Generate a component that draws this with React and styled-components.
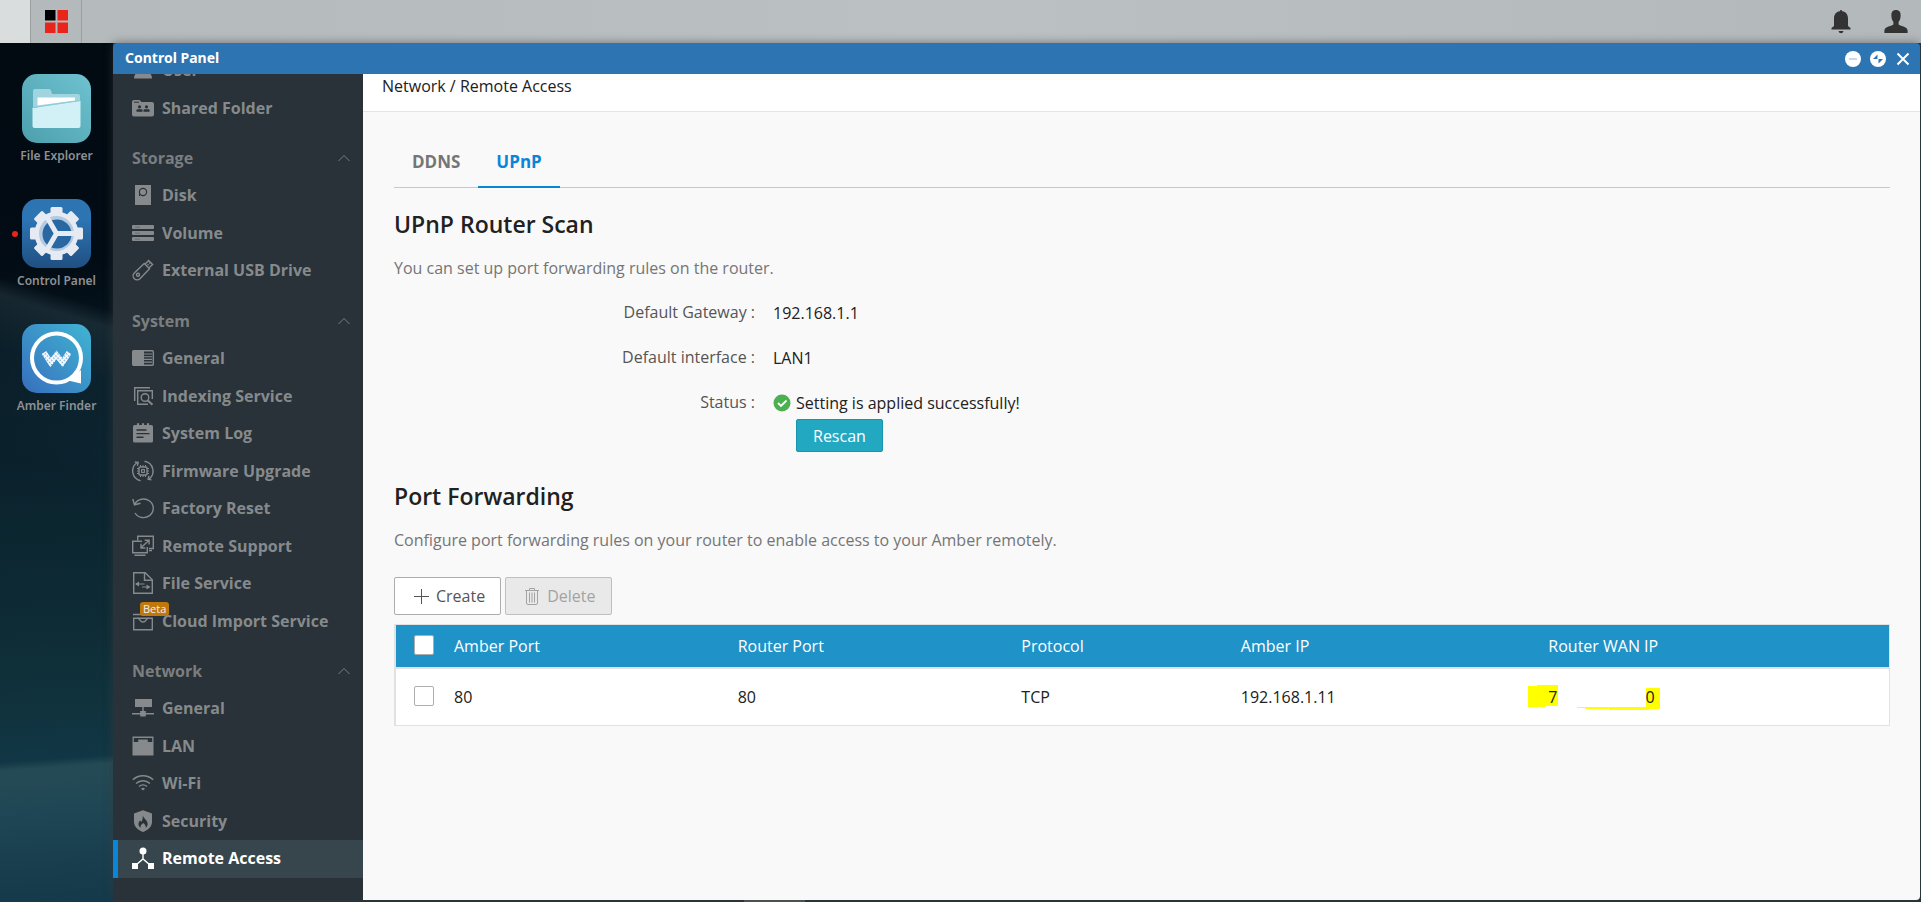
import React, { useState } from 'react';
import styled, { createGlobalStyle } from 'styled-components';

const GlobalStyle = createGlobalStyle`
  * {
    box-sizing: border-box;
  }

  body {
    margin: 0;
    font-family: 'Open Sans', 'Noto Sans', sans-serif;
    font-size: 16px;
    line-height: 24px;
    color: #212121;
  }

  button, input {
    font: inherit;
  }

  h1, h2, p, ul, dl, dd {
    margin: 0;
    padding: 0;
  }
`;

const Desktop = styled.div`
  height: 100vh;
  display: flex;
  flex-direction: column;
  overflow: hidden;
  background: linear-gradient(#4f5a5c, #4f5a5c) 40% 100% / 61px 2px no-repeat #24333a;
`;

const TopBar = styled.header`
  flex: none;
  height: 43px;
  display: flex;
  align-items: center;
  justify-content: space-between;
  background: linear-gradient(90deg, #b4b9bc 0%, #bbc0c3 50%, #b3b8bb 100%);
`;

const TopGroup = styled.div`
  display: flex;
  align-items: center;
  height: 100%;
  gap: ${({ $gap }) => $gap || 0}px;
  padding-right: ${({ $end }) => $end || 0}px;
`;

const StartCorner = styled.div`
  width: 30px;
  height: 100%;
  background: #d9dddd;
`;

const IconButton = styled.button`
  display: flex;
  align-items: center;
  justify-content: center;
  padding: 0;
  border: 0;
  background: none;
  cursor: pointer;
`;

const AppsButton = styled(IconButton)`
  width: 52px;
  height: 100%;
  padding-bottom: 1px;
  border-left: 1px solid #9a9fa2;
  border-right: 1px solid #9a9fa2;
`;

const Workspace = styled.div`
  flex: 1;
  min-height: 0;
  display: flex;
`;

const Dock = styled.nav`
  flex: none;
  width: 113px;
  padding-top: 31px;
  display: flex;
  flex-direction: column;
  gap: 33px;
  background:
    linear-gradient(197deg, transparent 30%, rgba(90, 120, 130, 0.22) 32%, rgba(30, 70, 85, 0.2) 38%, transparent 50%),
    linear-gradient(176deg, #020a12 0%, #020c14 26%, #0a202b 46%, #0e2c36 68%, #10323c 76%, #113645 83%, #244b55 84%, #1e4554 90%, #14394a 100%);
`;

const DockItem = styled.a`
  position: relative;
  display: flex;
  flex-direction: column;
  align-items: center;
  gap: 3px;
  color: #8d9194;
  font-family: 'Noto Sans', sans-serif;
  font-size: 12px;
  font-weight: 600;
  line-height: 20px;
  text-decoration: none;
`;

const RunningDot = styled.i`
  position: absolute;
  left: 12px;
  top: 32px;
  width: 6px;
  height: 6px;
  border-radius: 50%;
  background: #e8241b;
`;

const Window = styled.section`
  flex: 1;
  min-width: 0;
  margin: 0 1px 2px 0;
  display: flex;
  flex-direction: column;
  border-radius: 4px;
  box-shadow: 0 0 10px rgba(60, 60, 60, 0.6);
  overflow: hidden;
`;

const TitleBar = styled.div`
  flex: none;
  height: 31px;
  padding: 0 9px 0 12px;
  display: flex;
  align-items: center;
  justify-content: space-between;
  background: #2d74b3;
  color: #fff;
`;

const WindowTitle = styled.h1`
  padding-bottom: 2px;
  font-family: 'Noto Sans', sans-serif;
  font-size: 14px;
  font-weight: 700;
  line-height: 24px;
`;

const WindowControls = styled.div`
  display: flex;
  align-items: center;
  gap: 9px;
`;

const WindowBody = styled.div`
  flex: 1;
  min-height: 0;
  display: flex;
`;

/* reversed so that the list opens scrolled to its end */
const Sidebar = styled.aside`
  flex: none;
  width: 250px;
  display: flex;
  flex-direction: column-reverse;
  overflow-y: auto;
  scrollbar-width: none;
  background: #283238;
`;

const SideNav = styled.nav`
  flex: none;
  padding-bottom: 22px;
  display: flex;
  flex-direction: column;
  gap: 12px;
`;

const SectionToggle = styled.button`
  width: 100%;
  height: 38px;
  padding: 0 12px 0 19px;
  display: flex;
  align-items: center;
  justify-content: space-between;
  border: 0;
  background: none;
  color: #7b7e80;
  font-weight: 700;
  cursor: pointer;
`;

const SideList = styled.ul`
  list-style: none;
`;

const SideItem = styled.li`
  height: 38px;

  &:nth-child(even) {
    height: 37px;
  }
`;

const SideLink = styled.a`
  position: relative;
  height: 100%;
  padding: 0 0 2px 14px;
  display: flex;
  align-items: center;
  gap: 8px;
  border-left: 5px solid ${({ $active }) => ($active ? '#0b85d8' : 'transparent')};
  background: ${({ $active }) => ($active ? '#37464d' : 'none')};
  color: ${({ $active }) => ($active ? '#fff' : '#868a8c')};
  font-weight: 700;
  text-decoration: none;
`;

const BetaBadge = styled.span`
  position: absolute;
  left: 22px;
  top: -1px;
  padding: 0 3px;
  border-radius: 3px;
  background: #c0780d;
  color: #eee;
  font-size: 11px;
  font-weight: 400;
  line-height: 14px;
`;

const Main = styled.main`
  flex: 1;
  min-width: 0;
  overflow-y: auto;
  background: #f9f9f9;
`;

const Breadcrumb = styled.div`
  height: 38px;
  padding-left: 19px;
  border-bottom: 1px solid #e4e4e4;
  background: #fff;
`;

const Content = styled.div`
  padding: 25px 30px 25px 31px;
`;

const Tabs = styled.div`
  display: flex;
  margin-bottom: 20px;
  border-bottom: 1px solid #c8c8c8;
`;

const Tab = styled.button`
  height: 51px;
  margin-bottom: -1px;
  padding: 0 18px;
  border: 0;
  border-bottom: 2px solid ${({ $active }) => ($active ? '#0b85d8' : 'transparent')};
  background: none;
  color: ${({ $active }) => ($active ? '#0b85d8' : '#757575')};
  font-size: 17px;
  font-weight: 700;
  cursor: pointer;
`;

const SectionTitle = styled.h2`
  font-size: 23px;
  font-weight: 600;
  line-height: 32px;
`;

const Hint = styled.p`
  margin-top: 16px;
  color: #757575;
`;

const Details = styled.dl`
  margin: 20px 0 28px;
  display: flex;
  flex-direction: column;
  gap: 20px;
`;

const DetailRow = styled.div`
  display: flex;
  align-items: flex-start;
  gap: 18px;
`;

const DetailLabel = styled.dt`
  width: 361px;
  color: #555;
  text-align: right;
`;

const DetailValue = styled.dd`
  padding-top: 1px;
`;

const StatusLine = styled.div`
  display: flex;
  align-items: center;
  gap: 5px;
`;

const RescanButton = styled.button`
  height: 33px;
  margin: 4px 0 0 23px;
  padding: 0 16px;
  border: 1px solid #1a94ac;
  border-radius: 2px;
  background: #23a8c2;
  color: #fff;
  cursor: pointer;
`;

const Toolbar = styled.div`
  margin: 25px 0 9px;
  display: flex;
  gap: 4px;
`;

const ToolButton = styled.button`
  height: 38px;
  padding: 0 15px 0 17px;
  display: flex;
  align-items: center;
  gap: 6px;
  border: 1px solid #adadad;
  border-radius: 2px;
  background: #fff;
  color: #555;
  cursor: pointer;

  &:disabled {
    border-color: #bfbfbf;
    background: #e9e9e9;
    color: #a3a3a3;
    cursor: default;
  }
`;

const RuleTable = styled.table`
  width: 100%;
  table-layout: fixed;
  border: 1px solid #e2e2e2;
  border-left-width: 2px;
  border-spacing: 0;
  background: #fff;
`;

const HeadCell = styled.th`
  width: ${({ $width }) => $width || 'auto'};
  height: 44px;
  padding: 0 8px;
  border-bottom: 2px solid #e2e2e2;
  background: #1f92c8;
  color: #fff;
  font-weight: 400;
  text-align: left;
`;

const Cell = styled.td`
  height: 56px;
  padding: 0 8px;
`;

const CheckBox = styled.input`
  appearance: none;
  display: block;
  width: 20px;
  height: 20px;
  margin: 0 0 2px 10px;
  border: 1px solid #adadad;
  border-radius: 2px;
  background: #fff;

  &:checked {
    background: #23a8c2;
  }
`;

const MaskedAddress = styled.span`
  position: relative;
  display: flex;
  gap: 88px;
`;

const Highlight = styled.svg`
  position: absolute;
  left: -20px;
  top: 0;
`;

const MaskedDigit = styled.span`
  position: relative;
`;

const Icon = ({ children, size = 22 }) => (
  <svg
    width={size}
    height={size}
    viewBox="0 0 22 22"
    fill="none"
    stroke="currentColor"
    strokeWidth="1.4"
    aria-hidden="true"
  >
    {children}
  </svg>
);

const icons = {
  user: (
    <g fill="currentColor" stroke="none">
      <circle cx="11" cy="6" r="5" />
      <path d="M2 19.5c0-5 4-7.500 9-7.500s9 2.500 9 7.500z" />
    </g>
  ),
  shared: (
    <>
      <path d="M0 5a2 2 0 0 1 2-2h5.500l2 2H20a2 2 0 0 1 2 2v10.500a2 2 0 0 1-2 2H2a2 2 0 0 1-2-2z" fill="currentColor" stroke="none" />
      <path d="M2 5.200h5" stroke="#283238" strokeWidth="1" />
      <g fill="#283238" stroke="none">
        <circle cx="7.500" cy="9.800" r="1.600" />
        <circle cx="14.500" cy="9.800" r="1.600" />
        <path d="M4.500 14.800v-1.500q0-1 1-1h4q1 0 1 1v1.500zM11.500 14.800v-1.500q0-1 1-1h4q1 0 1 1v1.500z" />
      </g>
    </>
  ),
  disk: (
    <>
      <path d="M3 1h16v20H3z" fill="currentColor" stroke="none" />
      <circle cx="11" cy="8" r="3.600" stroke="#283238" strokeWidth="1.200" />
      <path d="M7.500 12v-2" stroke="#283238" strokeWidth="1" />
    </>
  ),
  volume: (
    <g fill="currentColor" stroke="none">
      <rect y="3" width="22" height="4" rx="1" />
      <rect y="9" width="22" height="4" rx="1" />
      <rect y="15" width="22" height="4" rx="1" />
      <path d="M3 4.800h5v.6H3zM3 10.800h5v.6H3zM3 16.800h5v.6H3z" fill="#5d6367" />
    </g>
  ),
  usb: (
    <>
      <path d="M12.200 4.500 2.300 14a4 4 0 0 0 5.700 5.700L17.500 9.800z" />
      <path d="M13 5.300 16.600 1.500l4 4-3.800 3.600" />
      <circle cx="6" cy="15.800" r="1.500" />
      <path d="m15.500 5.200 1 1m.7-2.600 1 1" />
    </>
  ),
  panel: (
    <>
      <rect x=".7" y="3.700" width="20.600" height="14.600" rx="1" />
      <path d="M1 4h11v14H1z" fill="currentColor" stroke="none" />
      <path d="M12 7h8M12 9.700h8M12 12.400h8M12 15.100h8" strokeWidth="1.100" />
    </>
  ),
  indexing: (
    <>
      <path d="M2.700 16V2.700H18" />
      <path d="M20.300 14V5.700H5.700v13.600H16" />
      <circle cx="13" cy="12.500" r="3.800" />
      <path d="m15.800 15.500 4.700 4.300" strokeWidth="2" />
    </>
  ),
  log: (
    <>
      <path d="M1 4.500Q1 3 2.500 3h17Q21 3 21 4.500V19q0 1.500-1.500 1.500h-17Q1 20.500 1 19z" fill="currentColor" stroke="none" />
      <path d="M6 1.200v3M11 1.200v3M16 1.200v3" strokeWidth="2.200" />
      <path d="M4.500 8h10M4.500 11.600h13M4.500 15.200h7" stroke="#283238" />
    </>
  ),
  firmware: (
    <>
      <path d="M8.500 20.800A10 10 0 0 1 5.500 2.500M2.800 2l3.400.3-.8 3.500M12.500 1.200a10 10 0 0 1 4 18.200M19.400 19.800l-3.300-.6.800-3.300" />
      <rect x="7" y="7" width="8" height="8" rx="1" />
      <rect x="9.600" y="9.600" width="2.800" height="2.800" strokeWidth="1.100" />
      <path d="M8.500 5v2M11 5v2M13.500 5v2M8.500 15v2M11 15v2M13.500 15v2M5 8.500h2M5 11h2M5 13.500h2M15 8.500h2M15 11h2M15 13.500h2" strokeWidth="1" />
    </>
  ),
  reset: (
    <path d="M2.800 7A9.800 9.300 0 1 1 3 16M.8 2l1.700 5.800 6-1.500" />
  ),
  support: (
    <>
      <path d="M5.700 5.500V1.200h15.600v12.300H17" />
      <path d="M10 6.200H.7v11.600h14.600V12M2.500 20.300H13.500M17 15.500h3" />
      <path d="m9 12.800 8-7.500M12.600 5.200h4.500v4.300M9 8.800v4.200h4.300" />
    </>
  ),
  file: (
    <>
      <path d="M1.700.7h11.500l7.100 7V21.300H1.700z" />
      <path d="M12.500 1v7.300h7.500" />
      <path d="M4 12h8.500M10 15h7.500" strokeWidth="1.200" />
      <path d="M3 12l4-2.500v5zM18.500 15l-4-2.500v5z" fill="currentColor" stroke="none" />
    </>
  ),
  cloud: (
    <>
      <path d="M1.700 8.200h18.600v11.600H1.700zM1 4.500h20" />
      <path d="M5.500 8.300c3 0 2 3.700 5.500 3.700s2.500-3.700 5.500-3.700" />
    </>
  ),
  network: (
    <>
      <path d="M3 2h17v8H3z" fill="currentColor" stroke="none" />
      <path d="M11 10v4M0 16.700h22" />
      <path d="M8.200 14h5.600v5.500H8.200z" fill="currentColor" stroke="none" />
    </>
  ),
  lan: (
    <>
      <path d="M.5 1.500h21v19H.5z" fill="currentColor" stroke="none" />
      <path d="M1.800 3h18.400v4h-4.400V4.600H6.200V7H1.800z" fill="#283238" stroke="none" />
    </>
  ),
  wifi: (
    <>
      <path d="M.8 7.800a15 15 0 0 1 20.400 0M4 11.500a10.300 10.300 0 0 1 14 0M7 14.500a6.200 6.200 0 0 1 8 0" />
      <path d="m11 18.500-2-1.800a3 3 0 0 1 4 0z" fill="currentColor" stroke="none" />
    </>
  ),
  security: (
    <>
      <path d="m11 .3 9 3.200v8.200c0 5-4 8.200-9 10.300-5-2.100-9-5.300-9-10.300V3.500z" fill="currentColor" stroke="none" />
      <path d="M10.800 5.500c.7 3 5 5 4.800 8.500 0 1.800-.8 3-1.800 3.700.2-2-.8-3.200-2.500-4.700-1.700 1.500-3.200 2.500-2.800 4.700-1.300-.7-2-2-2-3.500 0-1.700.7-2.500 1.600-3.700l1.200 1.500c1-1.500 1.700-4 1.500-6.500z" fill="#283238" stroke="none" />
    </>
  ),
  remote: (
    <>
      <circle cx="11" cy="4" r="3.500" fill="currentColor" stroke="none" />
      <path d="M11 6v7M4 18l7-6 7 6" />
      <path d="M0 16h6v6H0zM16 16h6v6h-6z" fill="currentColor" stroke="none" />
    </>
  ),
};

const sections = [
  {
    items: [
      { icon: 'user', label: 'User' },
      { icon: 'shared', label: 'Shared Folder' },
    ],
  },
  {
    title: 'Storage',
    items: [
      { icon: 'disk', label: 'Disk' },
      { icon: 'volume', label: 'Volume' },
      { icon: 'usb', label: 'External USB Drive' },
    ],
  },
  {
    title: 'System',
    items: [
      { icon: 'panel', label: 'General' },
      { icon: 'indexing', label: 'Indexing Service' },
      { icon: 'log', label: 'System Log' },
      { icon: 'firmware', label: 'Firmware Upgrade' },
      { icon: 'reset', label: 'Factory Reset' },
      { icon: 'support', label: 'Remote Support' },
      { icon: 'file', label: 'File Service' },
      { icon: 'cloud', label: 'Cloud Import Service', beta: true },
    ],
  },
  {
    title: 'Network',
    items: [
      { icon: 'network', label: 'General' },
      { icon: 'lan', label: 'LAN' },
      { icon: 'wifi', label: 'Wi-Fi' },
      { icon: 'security', label: 'Security' },
      { icon: 'remote', label: 'Remote Access', active: true },
    ],
  },
];

const FileExplorerIcon = () => (
  <svg width="69" height="69" viewBox="0 0 69 69" aria-hidden="true">
    <defs>
      <linearGradient id="explorer" x1="1" y1="0" x2="0" y2="1">
        <stop offset="0" stopColor="#6fc3d1" />
        <stop offset="1" stopColor="#4ca0ae" />
      </linearGradient>
    </defs>
    <rect width="69" height="69" rx="15" fill="url(#explorer)" />
    <path d="M11 17q0-2 2-2h14q2 0 2.500 3l.5 2h26q2 0 2 2v11H11z" fill="#a0d5df" />
    <path d="M15.500 23.500H53v3l-37.500 5z" fill="#fff" />
    <path d="m10.500 34 48-7v25q0 2-2 2h-44q-2 0-2-2z" fill="#d2f1f6" />
    <path d="m10.500 33.500 48-7" stroke="#8ecbd6" strokeWidth="1" />
  </svg>
);

const ControlPanelIcon = () => (
  <svg width="69" height="69" viewBox="0 0 69 69" aria-hidden="true">
    <defs>
      <linearGradient id="panel" x1="0" y1="0" x2="0" y2="1">
        <stop offset=".3" stopColor="#2d74b3" />
        <stop offset="1" stopColor="#1f5083" />
      </linearGradient>
    </defs>
    <rect width="69" height="69" rx="15" fill="url(#panel)" />
    <g fill="#e6ebf3">
      {[0, 45, 90, 135].map((angle) => (
        <rect
          key={angle}
          x="28.500"
          y="8"
          width="12"
          height="53"
          rx="1.500"
          transform={`rotate(${angle} 34.500 34.500)`}
        />
      ))}
      <circle cx="34.500" cy="34.500" r="22" />
    </g>
    <circle cx="34.500" cy="34.500" r="17.500" fill="#b3cae1" />
    <circle cx="35" cy="35" r="14.500" fill="#2867a1" />
    <path d="M52 34.500H34.500L25.500 19M34.500 34.500 25.500 50" fill="none" stroke="#e6ebf3" strokeWidth="5" />
  </svg>
);

const AmberFinderIcon = () => (
  <svg width="69" height="69" viewBox="0 0 69 69" aria-hidden="true">
    <defs>
      <linearGradient id="finder" x1="1" y1="0" x2="0" y2="1">
        <stop offset="0" stopColor="#40b5d3" />
        <stop offset="1" stopColor="#376fbd" />
      </linearGradient>
      <pattern id="weave" width="3" height="3" patternUnits="userSpaceOnUse" patternTransform="rotate(45)">
        <rect width="3" height="3" fill="#fff" />
        <rect x="1" y="1" width="1.400" height="1.400" fill="#5f9fd6" />
      </pattern>
    </defs>
    <rect width="69" height="69" rx="15" fill="url(#finder)" />
    <circle cx="34.500" cy="34" r="24.500" fill="none" stroke="#fff" strokeWidth="4" />
    <path d="M59 46v13.500L46 56.500z" fill="#fff" />
    <path d="m22 28.500 6.500 10 6-7.500 6 7.500 6.500-10" fill="none" stroke="url(#weave)" strokeWidth="5.500" />
  </svg>
);

const dockItems = [
  { label: 'File Explorer', art: <FileExplorerIcon /> },
  { label: 'Control Panel', art: <ControlPanelIcon />, running: true },
  { label: 'Amber Finder', art: <AmberFinderIcon /> },
];

const App = () => {
  const [tab, setTab] = useState('UPnP');

  return (
    <Desktop>
      <GlobalStyle />
      <TopBar>
        <TopGroup>
          <StartCorner />
          <AppsButton aria-label="Applications">
            <svg width="23" height="23" viewBox="0 0 23 23">
              <path d="M0 0h10.500v10.500H0z" fill="#000" />
              <path d="M12.500 0H23v10.500H12.500zM0 12.500h10.500V23H0zM12.500 12.500H23V23H12.500z" fill="#e8241b" />
            </svg>
          </AppsButton>
        </TopGroup>
        <TopGroup $gap={33} $end={13}>
          <IconButton aria-label="Notifications">
            <svg width="20" height="24" viewBox="0 0 20 24" fill="#333">
              <path d="M10 0q1 0 1.200 1.200C15 1.800 17 4.500 17 8.500V16l2.500 2v1.500H.5V18L3 16V8.500C3 4.500 5 1.800 8.800 1.200Q9 0 10 0zM7.500 21h5q-.5 2.300-2.500 2.300T7.500 21z" />
            </svg>
          </IconButton>
          <IconButton aria-label="Account">
            <svg width="24" height="24" viewBox="0 0 24 24" fill="#333">
              <path d="M12 0c3.200 0 4.800 2.200 4.600 5.500 0 3.500-1 5-2 6.500v2.500c1 1.500 9 2 9 6V23H.4v-2.500c0-4 8-4.500 9-6V12c-1-1.500-2-3-2-6.500C7.200 2.200 8.800 0 12 0z" />
            </svg>
          </IconButton>
        </TopGroup>
      </TopBar>
      <Workspace>
        <Dock aria-label="Desktop">
          {dockItems.map(({ label, art, running }) => (
            <DockItem key={label} href="#">
              {running && <RunningDot />}
              {art}
              {label}
            </DockItem>
          ))}
        </Dock>
        <Window>
          <TitleBar>
            <WindowTitle>Control Panel</WindowTitle>
            <WindowControls>
              <IconButton aria-label="Minimize">
                <svg width="16" height="16" viewBox="0 0 16 16">
                  <circle cx="8" cy="8" r="8" fill="#fff" />
                  <path d="M4 8h8" stroke="#8fb4d6" />
                </svg>
              </IconButton>
              <IconButton aria-label="Maximize">
                <svg width="16" height="16" viewBox="0 0 16 16">
                  <circle cx="8" cy="8" r="8" fill="#fff" />
                  <path d="M7.500 3.500v4.500H3zM8.500 12.500V8H13z" fill="#2d74b3" />
                </svg>
              </IconButton>
              <IconButton aria-label="Close">
                <svg width="16" height="16" viewBox="0 0 16 16">
                  <path d="m2.500 2.500 11 11m0-11-11 11" stroke="#fff" strokeWidth="2" />
                </svg>
              </IconButton>
            </WindowControls>
          </TitleBar>
          <WindowBody>
            <Sidebar>
              <SideNav aria-label="Settings">
                {sections.map(({ title, items }) => (
                  <div key={title || 'access'}>
                    {title && (
                      <SectionToggle>
                        {title}
                        <svg width="14" height="14" viewBox="0 0 14 14" fill="none" stroke="currentColor">
                          <path d="m1.500 10 5.500-5.500 5.500 5.500" />
                        </svg>
                      </SectionToggle>
                    )}
                    <SideList>
                      {items.map(({ icon, label, active, beta }) => (
                        <SideItem key={label}>
                          <SideLink href="#" $active={active}>
                            <Icon>{icons[icon]}</Icon>
                            {label}
                            {beta && <BetaBadge>Beta</BetaBadge>}
                          </SideLink>
                        </SideItem>
                      ))}
                    </SideList>
                  </div>
                ))}
              </SideNav>
            </Sidebar>
            <Main>
              <Breadcrumb>Network / Remote Access</Breadcrumb>
              <Content>
                <Tabs role="tablist">
                  {['DDNS', 'UPnP'].map((name) => (
                    <Tab
                      key={name}
                      role="tab"
                      aria-selected={tab === name}
                      $active={tab === name}
                      onClick={() => setTab(name)}
                    >
                      {name}
                    </Tab>
                  ))}
                </Tabs>

                <SectionTitle>UPnP Router Scan</SectionTitle>
                <Hint>You can set up port forwarding rules on the router.</Hint>
                <Details>
                  <DetailRow>
                    <DetailLabel>Default Gateway :</DetailLabel>
                    <DetailValue>192.168.1.1</DetailValue>
                  </DetailRow>
                  <DetailRow>
                    <DetailLabel>Default interface :</DetailLabel>
                    <DetailValue>LAN1</DetailValue>
                  </DetailRow>
                  <DetailRow>
                    <DetailLabel>Status :</DetailLabel>
                    <DetailValue>
                      <StatusLine>
                        <svg width="18" height="18" viewBox="0 0 18 18" aria-hidden="true">
                          <circle cx="9" cy="9" r="8.500" fill="#4caf50" />
                          <path d="m5 9 3 3 5.500-5.500" fill="none" stroke="#fff" strokeWidth="1.800" />
                        </svg>
                        Setting is applied successfully!
                      </StatusLine>
                      <RescanButton>Rescan</RescanButton>
                    </DetailValue>
                  </DetailRow>
                </Details>

                <SectionTitle>Port Forwarding</SectionTitle>
                <Hint>Configure port forwarding rules on your router to enable access to your Amber remotely.</Hint>
                <Toolbar>
                  <ToolButton>
                    <svg width="18" height="18" viewBox="0 0 18 18" stroke="currentColor" aria-hidden="true">
                      <path d="M9.500 2v15M2 9.500h15" />
                    </svg>
                    Create
                  </ToolButton>
                  <ToolButton disabled>
                    <svg width="18" height="18" viewBox="0 0 18 18" fill="none" stroke="currentColor" aria-hidden="true">
                      <path d="M2 3.500h14M6.500 3V1.500h5V3M3.500 4v12q0 1.500 1.500 1.500h8q1.500 0 1.500-1.500V4M6.500 5.500v10M9 5.500v10M11.500 5.500v10" />
                    </svg>
                    Delete
                  </ToolButton>
                </Toolbar>
                <RuleTable>
                  <thead>
                    <tr>
                      <HeadCell $width="50px">
                        <CheckBox type="checkbox" aria-label="Select all rules" />
                      </HeadCell>
                      <HeadCell $width="19%">Amber Port</HeadCell>
                      <HeadCell $width="19%">Router Port</HeadCell>
                      <HeadCell $width="14.7%">Protocol</HeadCell>
                      <HeadCell $width="20.6%">Amber IP</HeadCell>
                      <HeadCell>Router WAN IP</HeadCell>
                    </tr>
                  </thead>
                  <tbody>
                    <tr>
                      <Cell>
                        <CheckBox type="checkbox" aria-label="Select rule 80" />
                      </Cell>
                      <Cell>80</Cell>
                      <Cell>80</Cell>
                      <Cell>TCP</Cell>
                      <Cell>192.168.1.11</Cell>
                      <Cell>
                        <MaskedAddress>
                          <Highlight width="132" height="25" viewBox="0 0 132 25" fill="#ff0" aria-hidden="true">
                            <path d="M0 1h9V0h21v21H17v1H0zM118 3h14v21h-11v1H81v-1H57v-1h-8v-1h69z" />
                          </Highlight>
                          <MaskedDigit>7</MaskedDigit>
                          <MaskedDigit>0</MaskedDigit>
                        </MaskedAddress>
                      </Cell>
                    </tr>
                  </tbody>
                </RuleTable>
              </Content>
            </Main>
          </WindowBody>
        </Window>
      </Workspace>
    </Desktop>
  );
};

export default App;
